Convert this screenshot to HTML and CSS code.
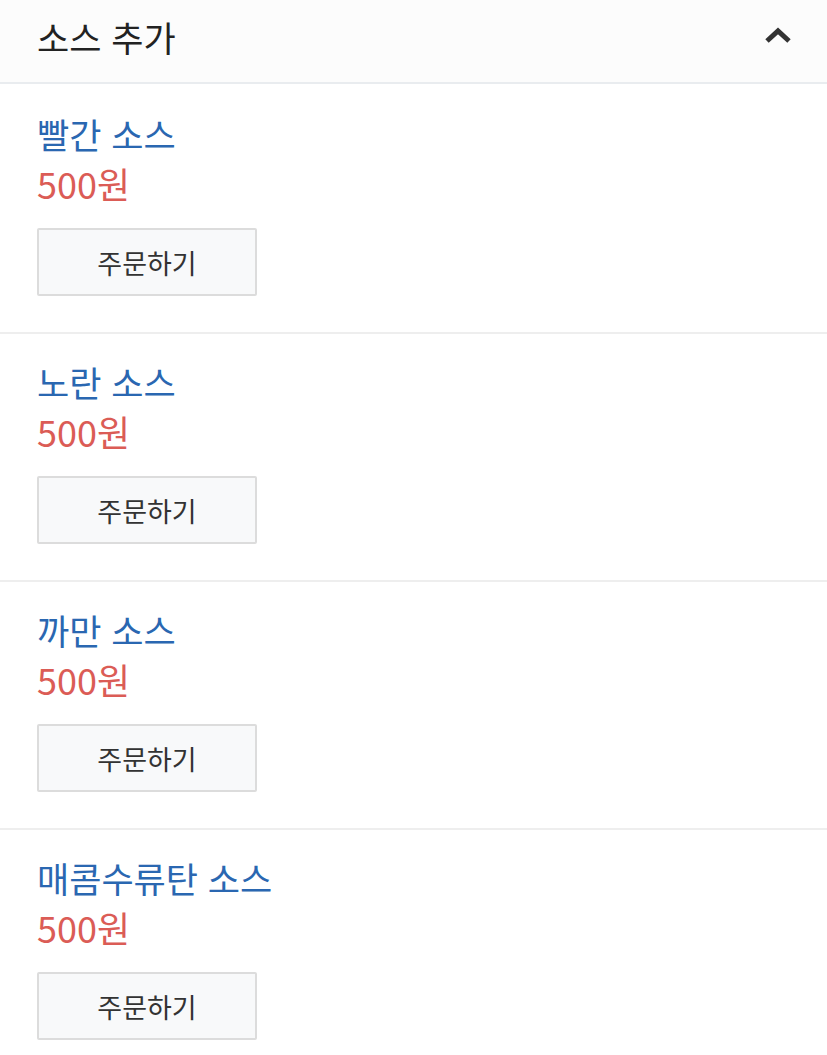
FILE: index.html
```html
<!DOCTYPE html>
<html lang="ko">
<head>
    <meta charset="UTF-8">
    <meta name="viewport" content="width=device-width, initial-scale=1.0">
    <title>소스 추가</title>
    <link rel="stylesheet" href="styles.css">
</head>
<body>
    <div class="panel">
        <div class="panel-header">
            <h2>소스 추가</h2>
            <svg class="toggle" width="30" height="20" viewBox="0 0 30 20">
                <path d="M4 15 L15 5 L26 15" fill="none" stroke="#333" stroke-width="5"/>
            </svg>
        </div>
        <ul class="menu">
            <li class="item">
                <div class="name">빨간 소스</div>
                <div class="price">500원</div>
                <button>주문하기</button>
            </li>
            <li class="item">
                <div class="name">노란 소스</div>
                <div class="price">500원</div>
                <button>주문하기</button>
            </li>
            <li class="item">
                <div class="name">까만 소스</div>
                <div class="price">500원</div>
                <button>주문하기</button>
            </li>
            <li class="item">
                <div class="name">매콤수류탄 소스</div>
                <div class="price">500원</div>
                <button>주문하기</button>
            </li>
        </ul>
    </div>
</body>
</html>
```

FILE: styles.css
```css
body {
    margin: 0;
    background: #fff;
    font-family: 'Noto Sans CJK KR', 'Noto Sans', sans-serif;
}

.panel-header {
    display: flex;
    justify-content: space-between;
    align-items: center;
    height: 72px;
    padding: 0 34px 10px 37px;
    background: #fcfcfc;
    border-bottom: 2px solid #e9ecef;
}

.panel-header h2 {
    margin: 0;
    font-size: 35px;
    font-weight: 400;
    color: #222;
}

.menu {
    list-style: none;
    margin: 0;
    padding: 2px 0 0;
}

.item {
    padding: 28px 37px 36px;
    border-bottom: 2px solid #eeeeee;
}

.name {
    font-size: 35px;
    line-height: 40px;
    color: #2a67b1;
}

.price {
    font-size: 36px;
    line-height: 40px;
    margin-top: 9px;
    color: #db5c56;
}

button {
    display: block;
    margin-top: 25px;
    width: 220px;
    height: 68px;
    font-family: inherit;
    font-size: 27px;
    color: #333;
    background-color: #f8f9fa;
    border: 2px solid #dcdcdc;
    border-radius: 2px;
    cursor: pointer;
}
```
